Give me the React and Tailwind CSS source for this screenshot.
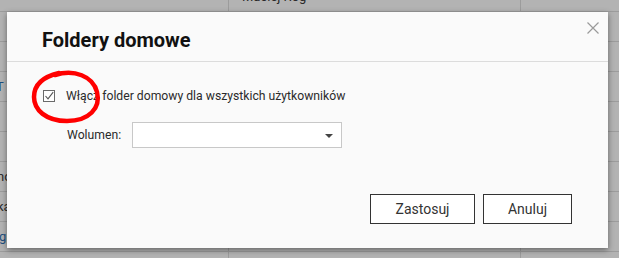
import React from "react";

const rows = [
  { a: "", b: "Maciej Rog" },
  { a: "", b: "" },
  { a: "", b: "" },
  { a: "T", b: "", aColor: "text-[#1d4f80]", off: "ml-[-4px]" },
  { a: "", b: "" },
  { a: "", b: "" },
  { a: "no", b: "", aColor: "text-[#2a2a2a]", off: "ml-[-3px]" },
  { a: "ka", b: "", aColor: "text-[#2a2a2a]", off: "ml-[-3px]" },
  { a: "g", b: "", aColor: "text-[#1d4f80]", off: "ml-[-1px]" },
  { a: "", b: "" },
];

export default function App() {
  return (
    <div
      className="relative w-[619px] h-[258px] overflow-hidden bg-[#b3b3b3]"
      style={{ fontFamily: "Roboto, 'Liberation Sans', sans-serif" }}
    >
      {/* background table */}
      <div className="flex flex-col mt-[-18px]">
        {rows.map((r, i) => (
          <div key={i} className="flex h-[30px] border-b border-[#9c9c9c] text-[13px]">
            <div className={`w-[228px] flex items-center ${r.aColor || ""}`}>
              <span className={r.off || ""}>{r.a}</span>
            </div>
            <div className="w-[292px] border-l border-[#9c9c9c] flex items-center pl-[13px] text-[#2a2a2a]">
              {r.b}
            </div>
            <div className="flex-1 border-l border-[#9c9c9c]"></div>
          </div>
        ))}
      </div>

      {/* dialog */}
      <div className="absolute left-[7px] top-[12px] w-[601px] h-[236px] bg-[#fafafa] shadow-[0_2px_6px_rgba(0,0,0,0.45)] flex flex-col">
        <div className="relative h-[50px] border-b border-[#dcdcdc] pl-[35px] pt-[17px]">
          <div className="text-[20px] leading-[22px] font-bold text-[#111]">Foldery domowe</div>
          <svg className="absolute left-[580px] top-[10px]" width="12" height="12" viewBox="0 0 12 12">
            <path d="M0.5 0.5 L11.5 11.5 M11.5 0.5 L0.5 11.5" stroke="#9a9a9a" strokeWidth="1.2" fill="none" />
          </svg>
        </div>
        <div className="flex flex-col pl-[36px] pt-[28px]">
          <div className="flex items-center gap-[11px] h-[12px]">
            <svg width="12" height="12" viewBox="0 0 12 12">
              <rect x="0.5" y="0.5" width="11" height="11" fill="#fff" stroke="#6a6a6a" />
              <path d="M2.5 6 L5 8.8 L10.2 2.2" stroke="#555" strokeWidth="1.1" fill="none" />
            </svg>
            <span className="text-[12.2px] text-[#2b2b2b] leading-[16px]">
              Włącz folder domowy dla wszystkich użytkowników
            </span>
          </div>
          <div className="flex items-center mt-[20px] pl-[24px]">
            <span className="w-[65px] text-[12.2px] text-[#2b2b2b]">Wolumen:</span>
            <div className="relative w-[210px] h-[26px] bg-white border border-[#c8c8c8]">
              <svg className="absolute right-[8px] top-[11px]" width="8" height="4" viewBox="0 0 8 4">
                <path d="M0 0 L8 0 L4 4 Z" fill="#444" />
              </svg>
            </div>
          </div>
        </div>
        <div className="flex justify-end gap-[8px] pr-[36px] mt-auto mb-[24px]">
          <button className="w-[105px] h-[30px] border border-[#333] bg-white text-[14px] text-[#333]">
            Zastosuj
          </button>
          <button className="w-[89px] h-[30px] border border-[#333] bg-white text-[14px] text-[#333]">
            Anuluj
          </button>
        </div>
      </div>

      {/* red annotation circle */}
      <svg className="absolute left-0 top-0 pointer-events-none" width="619" height="258" viewBox="0 0 619 258">
        <path
          d="M55 75 C 74 69, 93 76, 97 92 C 101 108, 89 121, 67 121 C 46 121, 34 110, 34 97 C 34 85, 42 77, 59 73"
          stroke="#ff0000"
          strokeWidth="4.5"
          fill="none"
          strokeLinecap="round"
        />
      </svg>
    </div>
  );
}
